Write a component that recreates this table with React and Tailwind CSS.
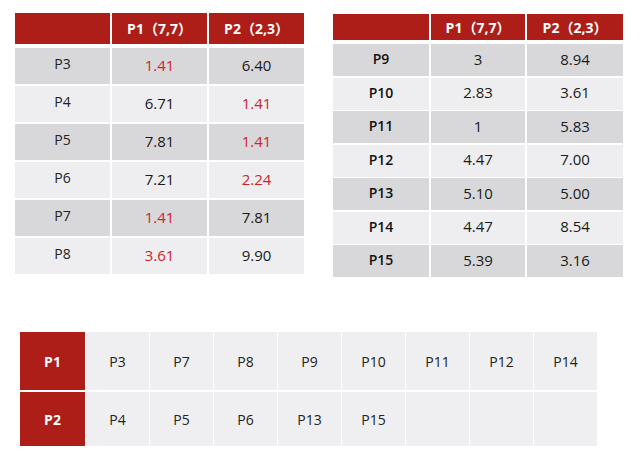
const leftRows = [
  ['P3', '1.41', '6.40', 1, 0],
  ['P4', '6.71', '1.41', 0, 1],
  ['P5', '7.81', '1.41', 0, 1],
  ['P6', '7.21', '2.24', 0, 1],
  ['P7', '1.41', '7.81', 1, 0],
  ['P8', '3.61', '9.90', 1, 0],
]

const rightRows = [
  ['P9', '3', '8.94'],
  ['P10', '2.83', '3.61'],
  ['P11', '1', '5.83'],
  ['P12', '4.47', '7.00'],
  ['P13', '5.10', '5.00'],
  ['P14', '4.47', '8.54'],
  ['P15', '5.39', '3.16'],
]

const groups = [
  ['P1', ['P3', 'P7', 'P8', 'P9', 'P10', 'P11', 'P12', 'P14']],
  ['P2', ['P4', 'P5', 'P6', 'P13', 'P15', '', '', '']],
]

const font = { fontFamily: '"Open Sans", "Noto Sans CJK SC", sans-serif' }

function LeftTable() {
  return (
    <div className="flex flex-col gap-[4px]">
      <div className="grid grid-cols-[95px_95px_95px] gap-x-[2px] h-[31px]">
        <div className="bg-[#ad1e18]" />
        <div className="bg-[#ad1e18] flex items-center justify-center text-white font-bold text-[14px]">P1（7,7）</div>
        <div className="bg-[#ad1e18] flex items-center justify-center text-white font-bold text-[14px]">P2（2,3）</div>
      </div>
      <div className="flex flex-col gap-[2px]">
        {leftRows.map(([p, a, b, ra, rb], i) => {
          const bg = i % 2 === 0 ? 'bg-[#d8d8da]' : 'bg-[#eeeef0]'
          return (
            <div key={p} className="grid grid-cols-[95px_95px_95px] gap-x-[2px] h-[36px]">
              <div className={`${bg} flex items-center justify-center pb-[5px] text-[14px] text-[#222]`}>{p}</div>
              <div className={`${bg} flex items-center justify-center pb-[2px] text-[15px] ${ra ? 'text-[#d0222c]' : 'text-[#1a1a1a]'}`}>{a}</div>
              <div className={`${bg} flex items-center justify-center pb-[2px] text-[15px] ${rb ? 'text-[#d0222c]' : 'text-[#1a1a1a]'}`}>{b}</div>
            </div>
          )
        })}
      </div>
    </div>
  )
}

function RightTable() {
  return (
    <div className="flex flex-col gap-[4px]">
      <div className="grid grid-cols-[96px_94px_96px] gap-x-[2px] h-[26px]">
        <div className="bg-[#ad1e18]" />
        <div className="bg-[#ad1e18] flex items-center justify-center text-white font-bold text-[14px]">P1（7,7）</div>
        <div className="bg-[#ad1e18] flex items-center justify-center text-white font-bold text-[14px]">P2（2,3）</div>
      </div>
      <div className="flex flex-col gap-[1.5px]">
        {rightRows.map(([p, a, b], i) => {
          const bg = i % 2 === 0 ? 'bg-[#d8d8da]' : 'bg-[#eeeef0]'
          return (
            <div key={p} className="grid grid-cols-[96px_94px_96px] gap-x-[2px] h-[32px]">
              <div className={`${bg} flex items-center justify-center pb-[3px] text-[14px] font-semibold text-[#111]`}>{p}</div>
              <div className={`${bg} flex items-center justify-center pb-[2px] text-[15px] text-[#1a1a1a]`}>{a}</div>
              <div className={`${bg} flex items-center justify-center pb-[2px] text-[15px] text-[#1a1a1a]`}>{b}</div>
            </div>
          )
        })}
      </div>
    </div>
  )
}

function Groups() {
  return (
    <div className="flex flex-col gap-[2px]">
      {groups.map(([head, items], r) => (
        <div key={head} className={`flex gap-[1px] ${r === 0 ? 'h-[58px]' : 'h-[54px]'}`}>
          <div className="w-[65px] bg-[#ad1e18] flex items-center justify-center text-white font-bold text-[14px]">{head}</div>
          {items.map((it, i) => (
            <div key={i} className="w-[63px] bg-[#efeff1] flex items-center justify-center text-[14px] text-[#222]">{it}</div>
          ))}
        </div>
      ))}
    </div>
  )
}

export default function App() {
  return (
    <div className="w-[640px] h-[455px] bg-white overflow-hidden" style={font}>
      <div className="flex pt-[13px] pl-[15px]">
        <LeftTable />
        <div className="ml-[29px] mt-[1px]">
          <RightTable />
        </div>
      </div>
      <div className="pl-[20px] mt-[55px]">
        <Groups />
      </div>
    </div>
  )
}
